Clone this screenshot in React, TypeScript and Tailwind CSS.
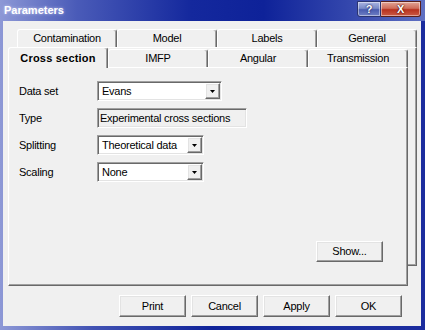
import React from "react";

const raised =
  "border border-t-white border-l-white border-r-[#696969] border-b-[#696969] shadow-[inset_-1px_-1px_0_#a0a0a0,inset_1px_1px_0_#e3e3e3]";
const sunken =
  "border border-t-[#a0a0a0] border-l-[#a0a0a0] border-r-white border-b-white shadow-[inset_1px_1px_0_#696969,inset_-1px_-1px_0_#e3e3e3]";

function Arrow() {
  return (
    <svg width="5" height="3" viewBox="0 0 5 3">
      <polygon points="0,0 5,0 2.5,3" fill="#000" />
    </svg>
  );
}

function Select({ width, value }: { width: string; value: string }) {
  return (
    <div className={`flex h-[20px] ${width} p-px bg-white ${sunken}`}>
      <div className="flex-1 pl-[3px] leading-[16px] whitespace-nowrap overflow-hidden">{value}</div>
      <div className={`w-[15px] h-[16px] bg-[#f0f0f0] flex items-center justify-center ${raised}`}>
        <Arrow />
      </div>
    </div>
  );
}

function Tab({ label, selected }: { label: string; selected?: boolean }) {
  if (selected) {
    return (
      <div className="relative z-10 self-start w-[100px] h-[21px] bg-[#f0f0f0] border-l border-t border-r border-l-white border-t-white border-r-[#696969] rounded-t-[3px] shadow-[inset_-1px_0_0_#a0a0a0] flex justify-center pt-[4px] font-bold tracking-[0.2px] leading-[13px]">
        {label}
      </div>
    );
  }
  return (
    <div className="self-end w-[100px] h-[18px] bg-[#f0f0f0] border-l border-t border-r border-l-white border-t-white border-r-[#696969] rounded-t-[3px] shadow-[inset_-1px_0_0_#a0a0a0] flex justify-center pt-[2px] leading-[13px]">
      {label}
    </div>
  );
}

function Button({ label }: { label: string }) {
  return (
    <div className={`w-[67px] h-[22px] bg-[#f0f0f0] flex items-center justify-center ${raised}`}>
      {label}
    </div>
  );
}

export default function App() {
  return (
    <div className="w-[425px] h-[330px] flex flex-col bg-[linear-gradient(to_right,#8d98d6_0%,#4152b3_22%,#0f2399_50%,#1d30a0_75%,#1b2c9e_100%)] font-['Liberation_Sans',Arial,sans-serif] text-[11px] tracking-[-0.25px] text-black select-none">
      {/* Title bar */}
      <div className="h-[21px] flex items-start bg-[linear-gradient(to_right,#8d98d6_0%,#4a5bb8_18%,#14289d_45%,#0e2299_62%,#3447ad_82%,#6070c2_100%)]">
        <div className="pl-[4px] pt-[4px] text-white font-bold text-[11px] tracking-normal leading-[13px] [text-shadow:0_0_3px_#c8ccf0]">
          Parameters
        </div>
        <div className="ml-auto mr-[4px] flex mt-px">
          <div className="w-[24px] h-[16px] rounded-bl-[3px] border border-[#2b3470] bg-[linear-gradient(to_bottom,#aab4e2_0%,#7b8cc8_45%,#4a5cb0_55%,#6f80c4_100%)] shadow-[inset_0_0_0_1px_rgba(255,255,255,0.45)] flex items-center justify-center text-white font-bold text-[11px] leading-none [text-shadow:0_0_1px_#1a2060,0_0_2px_#1a2060]">
            ?
          </div>
          <div className="w-[40px] h-[16px] rounded-br-[3px] border border-l-0 border-[#5a1f1a] bg-[linear-gradient(to_bottom,#e2a596_0%,#cf6d5a_45%,#b8321f_55%,#cc5a45_100%)] shadow-[inset_0_0_0_1px_rgba(255,255,255,0.45)] flex items-center justify-center text-white font-bold text-[11px] leading-none [text-shadow:0_0_1px_#4a0c06,0_0_2px_#4a0c06]">
            X
          </div>
        </div>
      </div>

      {/* Client area */}
      <div className="flex-1 ml-[3px] mr-[4px] mb-[4px] bg-[#f0f0f0] flex flex-col">
        <div className="mt-[6px] ml-[5px] w-[409px] grid grid-cols-1 grid-rows-1">
          {/* Back layer */}
          <div className="col-start-1 row-start-1 ml-[9px] w-[400px] h-[239px] flex flex-col">
            <div className="flex h-[20px]">
              <Tab label="Contamination" />
              <Tab label="Model" />
              <Tab label="Labels" />
              <Tab label="General" />
            </div>
            <div className="flex-1 bg-[#f0f0f0] border border-l-white border-t-white border-r-[#696969] border-b-[#696969] shadow-[inset_-1px_-1px_0_#a0a0a0]" />
          </div>

          {/* Front layer */}
          <div className="col-start-1 row-start-1 mt-[20px] w-[400px] h-[239px] flex flex-col">
            <div className="flex h-[20px]">
              <Tab label="Cross section" selected />
              <Tab label="IMFP" />
              <Tab label="Angular" />
              <Tab label="Transmission" />
            </div>
            <div className="flex-1 bg-[#f0f0f0] border border-l-white border-t-white border-r-[#696969] border-b-[#696969] shadow-[inset_-1px_-1px_0_#a0a0a0] flex flex-col">
              <div className="pt-[13px] pl-[10px] flex flex-col gap-[7px]">
                <div className="flex items-center">
                  <div className="w-[78px]">Data set</div>
                  <Select width="w-[125px]" value="Evans" />
                </div>
                <div className="flex items-center">
                  <div className="w-[78px]">Type</div>
                  <div className={`h-[20px] w-[150px] p-px bg-[#f0f0f0] ${sunken}`}>
                    <div className="pl-px leading-[16px] whitespace-nowrap">Experimental cross sections</div>
                  </div>
                </div>
                <div className="flex items-center">
                  <div className="w-[78px]">Splitting</div>
                  <Select width="w-[107px]" value="Theoretical data" />
                </div>
                <div className="flex items-center">
                  <div className="w-[78px]">Scaling</div>
                  <Select width="w-[107px]" value="None" />
                </div>
              </div>
              <div className="flex-1" />
              <div className="flex justify-end pr-[24px] pb-[23px]">
                <div className={`w-[67px] h-[21px] bg-[#f0f0f0] flex items-center justify-center ${raised}`}>
                  Show...
                </div>
              </div>
            </div>
          </div>
        </div>

        <div className="mt-[9px] pr-[19px] flex justify-end gap-[5px]">
          <Button label="Print" />
          <Button label="Cancel" />
          <Button label="Apply" />
          <Button label="OK" />
        </div>
      </div>
    </div>
  );
}
